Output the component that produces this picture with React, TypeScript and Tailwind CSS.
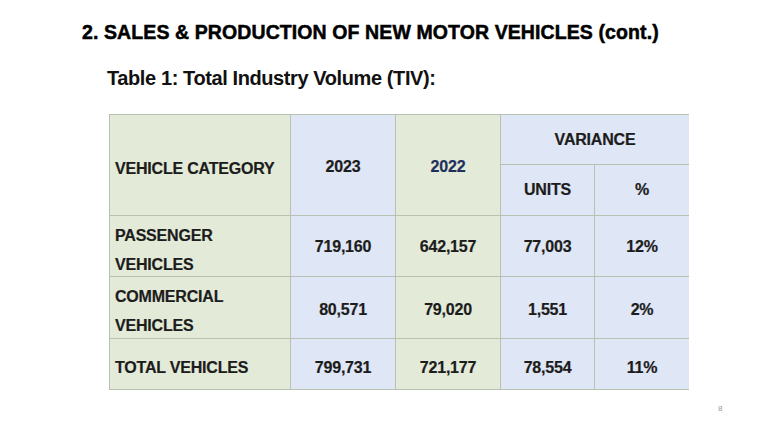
const rows = [
  { label: ["PASSENGER", "VEHICLES"], y23: "719,160", y22: "642,157", units: "77,003", pct: "12%", h: "h-[60px]", lp: "pt-[8px]", np: "pt-[2px]" },
  { label: ["COMMERCIAL", "VEHICLES"], y23: "80,571", y22: "79,020", units: "1,551", pct: "2%", h: "h-[61px]", lp: "pt-[6px]", np: "pt-[5px]" },
  { label: ["TOTAL VEHICLES"], y23: "799,731", y22: "721,177", units: "78,554", pct: "11%", h: "h-[50px]", lp: "pt-[6px]", np: "pt-[8px]" },
]

const green = "bg-[#e3ebd8]"
const blue = "bg-[#dfe6f5]"

export default function App() {
  return (
    <div
      className="relative h-[432px] w-[768px] overflow-hidden bg-white text-[#1a1a1a]"
      style={{ fontFamily: '"Liberation Sans", Arial, sans-serif' }}
    >
      <div className="pl-[82px] pt-[19px]">
        <h1 className="text-[19.5px] font-bold leading-[26px] tracking-[0.1px] text-black [-webkit-text-stroke:0.5px_black]">
          2. SALES &amp; PRODUCTION OF NEW MOTOR VEHICLES (cont.)
        </h1>
        <h2 className="mt-[21px] pl-[25px] text-[20px] font-bold leading-[24px] tracking-[-0.4px] text-[#111]">
          Table 1: Total Industry Volume (TIV):
        </h2>
      </div>

      <div className="ml-[109px] mt-[24px] w-[580px] bg-[#b8c2b2] p-px">
        <div className="grid grid-cols-[180px_104px_104px_93px_94px] gap-px text-[16px] font-bold tracking-[-0.2px] text-[#1c1c1c] [-webkit-text-stroke:0.2px_#1c1c1c]">
          <div className={`${green} row-span-2 flex items-center pl-[5px] pt-[8px]`}>VEHICLE CATEGORY</div>
          <div className={`${blue} row-span-2 flex items-center justify-center pt-[4px]`}>2023</div>
          <div className={`${green} row-span-2 flex items-center justify-center pt-[4px] text-[#1f2f5c] [-webkit-text-stroke:0.2px_#1f2f5c]`}>2022</div>
          <div className={`${blue} col-span-2 flex h-[49px] items-center justify-center`}>VARIANCE</div>
          <div className={`${blue} flex h-[50px] items-center justify-center`}>UNITS</div>
          <div className={`${blue} flex h-[50px] items-center justify-center`}>%</div>

          {rows.map((r) => (
            <div key={r.y23} className="contents">
              <div className={`${green} ${r.h} ${r.lp} flex flex-col justify-center pl-[5px] leading-[29px]`}>
                {r.label.map((l) => (
                  <span key={l}>{l}</span>
                ))}
              </div>
              <div className={`${blue} ${r.np} flex items-center justify-center`}>{r.y23}</div>
              <div className={`${green} ${r.np} flex items-center justify-center`}>{r.y22}</div>
              <div className={`${blue} ${r.np} flex items-center justify-center`}>{r.units}</div>
              <div className={`${blue} ${r.np} flex items-center justify-center`}>{r.pct}</div>
            </div>
          ))}
        </div>
      </div>

      <div className="absolute left-[718px] top-[403px] text-[8px] text-[#999]">8</div>
    </div>
  )
}
